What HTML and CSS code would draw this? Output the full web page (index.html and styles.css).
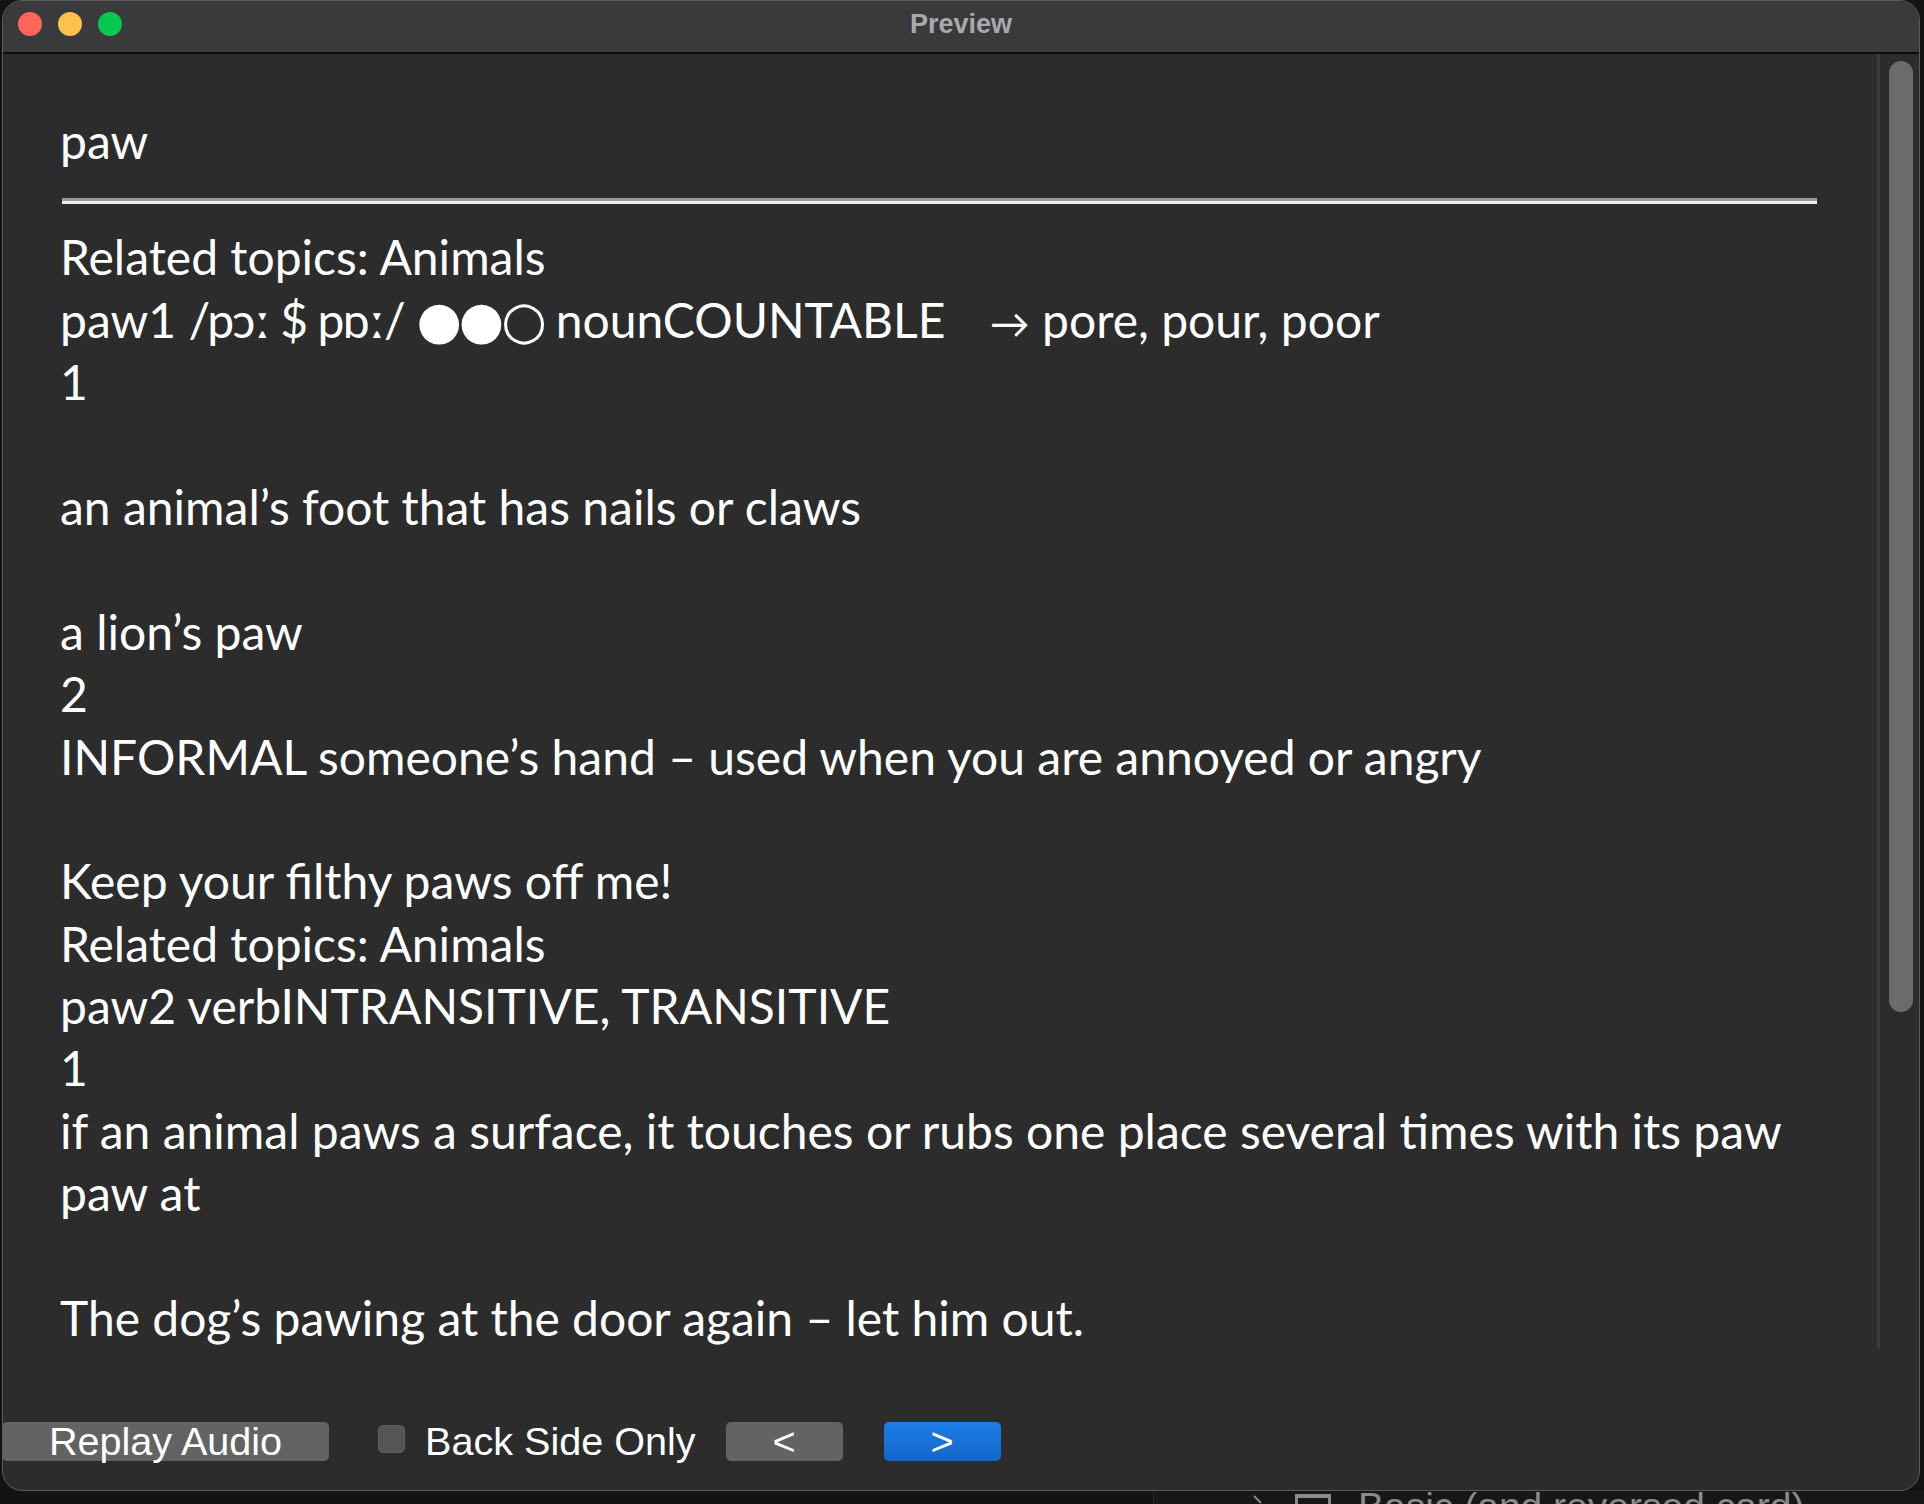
FILE: index.html
```html
<!DOCTYPE html>
<html lang="en">
<head>
<meta charset="utf-8">
<title>Preview</title>
<link rel="stylesheet" href="styles.css">
</head>
<body>
<div class="window">
  <div class="titlebar">
    <div class="lights">
      <span class="light red"></span>
      <span class="light yellow"></span>
      <span class="light green"></span>
    </div>
    <div class="title">Preview</div>
  </div>
  <div class="content">
    <div class="card">
      <div class="line">paw</div>
      <hr class="answer">
      <div class="line">Related topics: Animals</div>
      <div class="line">paw1 <span class="ipa">/pɔː $ pɒː/</span> <span class="freq">●●○</span> nounCOUNTABLE <span class="xref"><span class="arrow">→</span> pore, pour, poor</span></div>
      <div class="line">1</div>
      <div class="line blank"></div>
      <div class="line">an animal’s foot that has nails or claws</div>
      <div class="line blank"></div>
      <div class="line">a lion’s paw</div>
      <div class="line">2</div>
      <div class="line">INFORMAL someone’s hand – used when you are annoyed or angry</div>
      <div class="line blank"></div>
      <div class="line">Keep your filthy paws off me!</div>
      <div class="line">Related topics: Animals</div>
      <div class="line">paw2 verbINTRANSITIVE, TRANSITIVE</div>
      <div class="line">1</div>
      <div class="line">if an animal paws a surface, it touches or rubs one place several times with its paw</div>
      <div class="line">paw at</div>
      <div class="line blank"></div>
      <div class="line">The dog’s pawing at the door again – let him out.</div>
    </div>
    <div class="scrollbar"><div class="thumb"></div></div>
  </div>
  <div class="bottombar">
    <div class="btn replay">Replay Audio</div>
    <span class="check"></span>
    <span class="check-label">Back Side Only</span>
    <div class="btn nav prev">&lt;</div>
    <div class="btn nav next">&gt;</div>
  </div>
</div>
<div class="peek">
  <svg class="chev" width="10" height="14" viewBox="0 0 10 14"><path d="M1 1 L8 8" stroke="#8a8a8a" stroke-width="2" fill="none"/></svg>
  <span class="peek-icon"></span>
  <span class="peek-text">Basic (and reversed card)</span>
</div>
</body>
</html>
```
FILE: styles.css
```css
html, body {
  margin: 0;
  height: 1504px;
  overflow: hidden;
  background: #131313;
}
body {
  position: relative;
  font-family: "Liberation Sans", Arial, sans-serif;
}
.window {
  position: relative;
  z-index: 1;
  margin-left: 2px;
  width: 1918px;
  height: 1491px;
  box-sizing: border-box;
  border: 1px solid #5a5a5a;
  border-radius: 20px;
  background: #2c2c2c;
  overflow: hidden;
  display: flex;
  flex-direction: column;
}
.titlebar {
  position: relative;
  flex: none;
  height: 51px;
  background: #3a3a3c;
  border-bottom: 2px solid #0e0e0e;
  display: flex;
  align-items: center;
  justify-content: center;
}
.lights {
  position: absolute;
  left: 15px;
  top: 11px;
  display: flex;
  gap: 16px;
}
.light {
  width: 24px;
  height: 24px;
  border-radius: 50%;
}
.red { background: #ff6559; }
.yellow { background: #fdc04c; }
.green { background: #05c853; }
.title {
  font-weight: bold;
  font-size: 27px;
  color: #a9a9ab;
  margin-top: -4px;
}
.content {
  flex: 1;
  display: flex;
  min-height: 0;
}
.card {
  flex: 1;
  min-width: 0;
  padding: 56px 60px 0 57px;
  overflow: hidden;
  font-family: Lato, "DejaVu Sans", sans-serif;
  font-size: 48px;
  line-height: 62.4px;
  color: #ffffff;
}
.line {
  white-space: nowrap;
  height: 62.4px;
}
hr.answer {
  margin: 26px 0 22px 2px;
  height: 0;
  border: none;
  border-top: 3px solid #9a9a9a;
  border-bottom: 3px solid #ececec;
}
.ipa {
  letter-spacing: -1.5px;
}
.freq {
  font-family: "DejaVu Sans", sans-serif;
  font-size: 52px;
  line-height: 0;
  letter-spacing: -3px;
}
.xref {
  margin-left: 32px;
}
.arrow {
  font-size: 40px;
}
.scrollbar {
  flex: none;
  width: 39px;
  border-left: 3px solid #3a3a3a;
  background: #2c2c2c;
}
.thumb {
  margin: 7px 0 0 9px;
  width: 24px;
  height: 951px;
  border-radius: 12px;
  background: #6b6b6b;
}
.bottombar {
  flex: none;
  height: 142px;
  box-sizing: border-box;
  padding-top: 74px;
  display: flex;
  align-items: flex-start;
  color: #ffffff;
  font-size: 39.6px;
}
.btn {
  height: 39px;
  border-radius: 5px;
  background: #636363;
  color: #ffffff;
  display: flex;
  align-items: center;
  justify-content: center;
  line-height: 39px;
}
.replay {
  width: 327px;
  margin-left: -1px;
}
.check {
  margin: 3px 0 0 49px;
  width: 27px;
  height: 28px;
  box-sizing: border-box;
  border-radius: 5px;
  background: #555555;
  border: 1px solid #606060;
}
.check-label {
  margin-left: 20px;
  line-height: 39px;
}
.nav {
  width: 117px;
}
.prev {
  margin-left: 30px;
}
.next {
  margin-left: 41px;
  background: linear-gradient(#1b7de8, #1467c9);
}
.peek {
  position: absolute;
  left: 1153px;
  top: 1491px;
  right: 0;
  height: 13px;
  overflow: hidden;
  background: #171717;
  border-left: 1px solid #2c2c2c;
  display: flex;
  align-items: flex-start;
  padding-left: 99px;
}
.chev {
  margin-top: 4px;
}
.peek-icon {
  margin: 3px 0 0 32px;
  width: 36px;
  height: 30px;
  box-sizing: border-box;
  border: 3px solid #8a8a8a;
  border-top-width: 4px;
}
.peek-text {
  margin-left: 27px;
  margin-top: -6px;
  font-size: 39px;
  line-height: 44px;
  color: #8a8a8a;
}
```
